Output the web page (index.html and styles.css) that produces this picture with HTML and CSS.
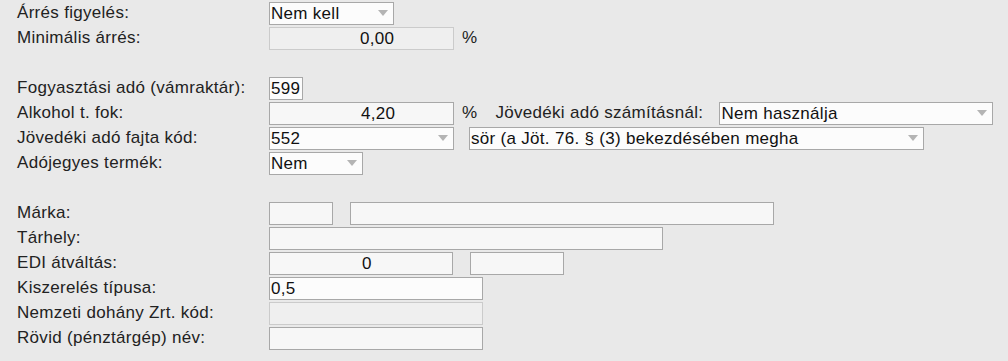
FILE: index.html
```html
<!DOCTYPE html>
<html lang="hu">
<head>
  <meta charset="UTF-8">
  <title>Termék adatok</title>
  <link rel="stylesheet" href="styles.css">
</head>
<body>
  <form class="form">
    <!-- Árrés -->
    <div class="row">
      <label class="label">Árrés figyelés:</label>
      <div class="select w-125 active"><span>Nem kell</span><i class="arrow"></i></div>
    </div>
    <div class="row">
      <label class="label">Minimális árrés:</label>
      <div class="field w-185 disabled num">0,00</div>
      <span class="unit">%</span>
    </div>
    <div class="row"></div>

    <!-- Adók -->
    <div class="row">
      <label class="label">Fogyasztási adó (vámraktár):</label>
      <div class="field w-34 active">599</div>
    </div>
    <div class="row">
      <label class="label">Alkohol t. fok:</label>
      <div class="field w-185 num num-wide">4,20</div>
      <span class="unit">%</span>
      <label class="label-inline">Jövedéki adó számításnál:</label>
      <div class="select w-274 active"><span>Nem használja</span><i class="arrow"></i></div>
    </div>
    <div class="row">
      <label class="label">Jövedéki adó fajta kód:</label>
      <div class="select w-185 active"><span>552</span><i class="arrow"></i></div>
      <div class="select w-455 active gap-15"><span>sör (a Jöt. 76. § (3) bekezdésében megha</span><i class="arrow"></i></div>
    </div>
    <div class="row">
      <label class="label">Adójegyes termék:</label>
      <div class="select w-94 active"><span>Nem</span><i class="arrow"></i></div>
    </div>
    <div class="row"></div>

    <!-- Egyéb -->
    <div class="row">
      <label class="label">Márka:</label>
      <div class="field w-64"></div>
      <div class="field w-424 gap-17"></div>
    </div>
    <div class="row">
      <label class="label">Tárhely:</label>
      <div class="field w-394"></div>
    </div>
    <div class="row">
      <label class="label">EDI átváltás:</label>
      <div class="field w-184 num num-edi">0</div>
      <div class="field w-94 gap-17"></div>
    </div>
    <div class="row">
      <label class="label">Kiszerelés típusa:</label>
      <div class="field w-214 active">0,5</div>
    </div>
    <div class="row">
      <label class="label">Nemzeti dohány Zrt. kód:</label>
      <div class="field w-214 disabled"></div>
    </div>
    <div class="row">
      <label class="label">Rövid (pénztárgép) név:</label>
      <div class="field w-214"></div>
    </div>
  </form>
</body>
</html>
```

FILE: styles.css
```css
/* Általános */
body {
  margin: 0;
  padding: 0 0 0 17px;
  background-color: #e9e9e9;
  color: #222;
  font-family: "Liberation Sans", Arial, sans-serif;
  font-size: 17px;
  letter-spacing: 0.3px;
}
.form {
  display: flex;
  flex-direction: column;
}
.row {
  display: flex;
  align-items: center;
  height: 25px;
}
.label {
  width: 252px;
  flex: none;
  white-space: nowrap;
}
.label-inline {
  margin-left: 18px;
  width: 224px;
  white-space: nowrap;
}
.unit {
  margin-left: 8px;
}

/* Mezők */
.field,
.select {
  box-sizing: border-box;
  height: 23px;
  margin-top: 1px;
  flex: none;
  background: #f7f7f7;
  border: 1px solid #a8a8a8;
  padding: 0 1px;
  line-height: 21px;
  color: #111;
  white-space: nowrap;
  overflow: hidden;
}
.field.active,
.select.active {
  background: #fcfcfc;
}
.field.disabled {
  background: #efefef;
  border-color: #cbcbcb;
}
.field.num {
  padding-left: 90px;
}
.field.num-wide {
  padding-left: 91px;
}
.field.num-edi {
  padding-left: 92px;
}
.select {
  display: flex;
  align-items: center;
  justify-content: space-between;
  padding-right: 5px;
}
.arrow {
  width: 0;
  height: 0;
  border-left: 5px solid transparent;
  border-right: 5px solid transparent;
  border-top: 6px solid #b4b4b4;
}

/* Szélességek */
.w-34 { width: 34px; }
.w-64 { width: 64px; }
.w-94 { width: 94px; }
.w-125 { width: 125px; }
.w-184 { width: 184px; }
.w-185 { width: 185px; }
.w-214 { width: 214px; }
.w-274 { width: 274px; }
.w-394 { width: 394px; }
.w-424 { width: 424px; }
.w-455 { width: 455px; }
.gap-15 { margin-left: 15px; }
.gap-17 { margin-left: 17px; }
```
